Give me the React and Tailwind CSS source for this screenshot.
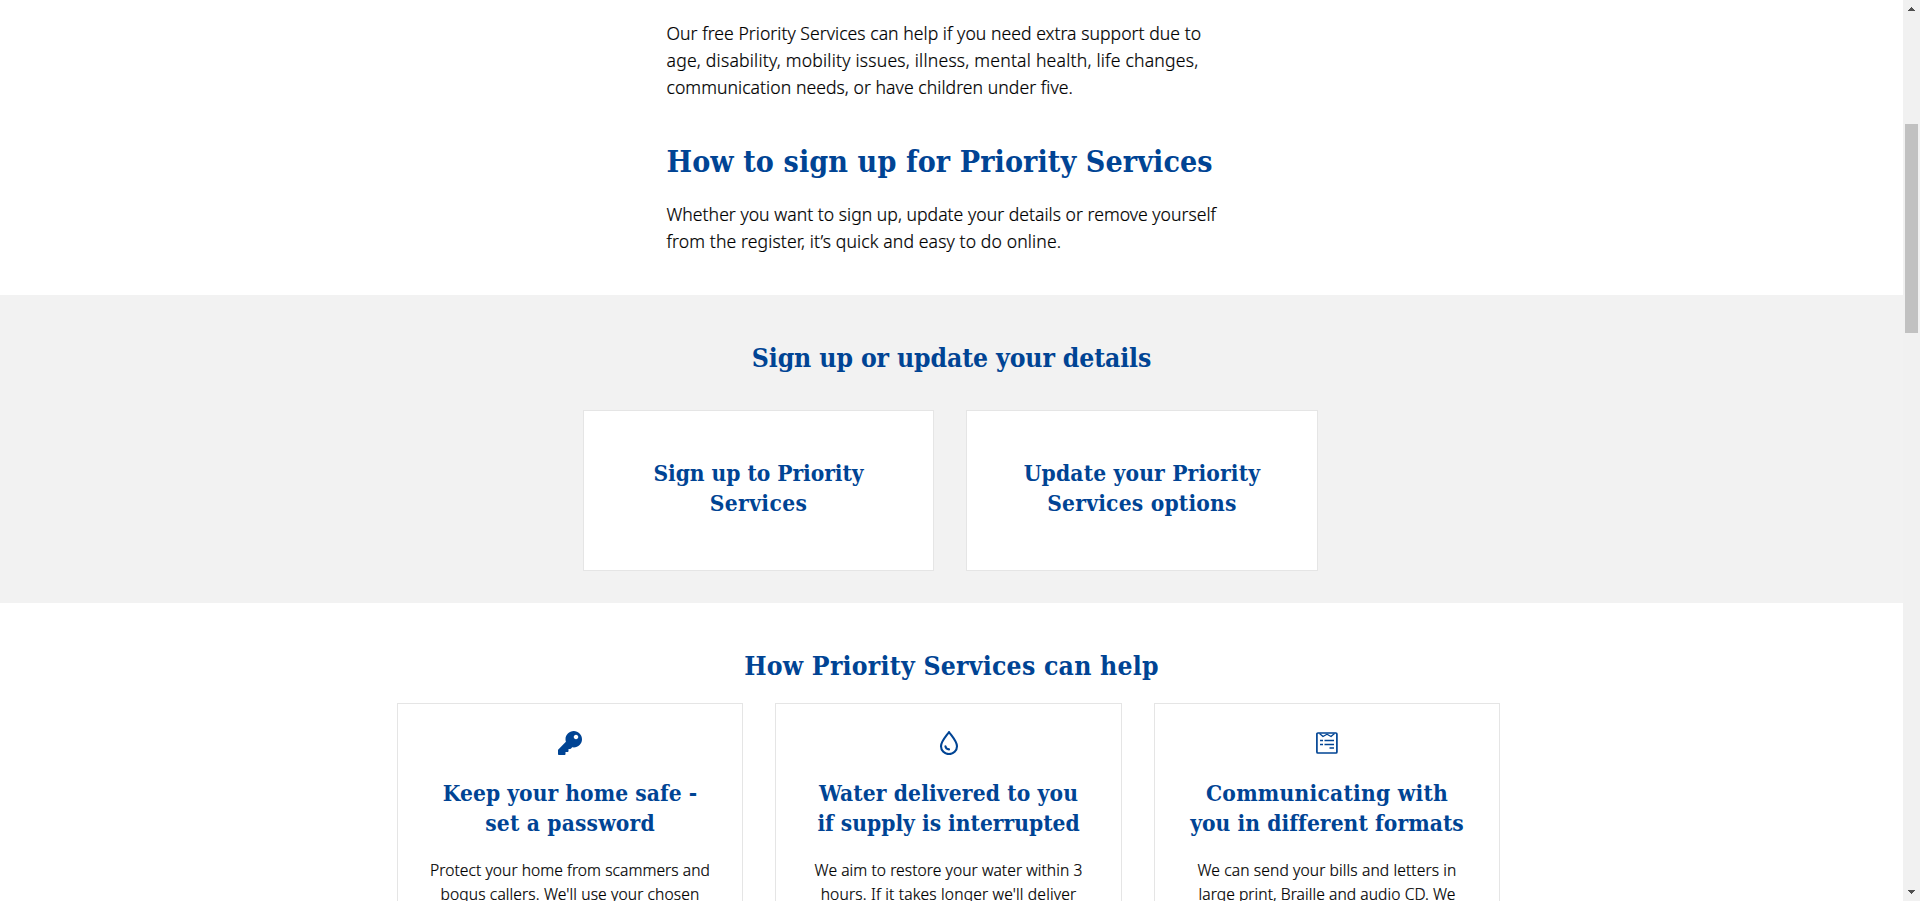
import { FaKey } from "react-icons/fa";

const HEADING =
  "font-['DejaVu_Serif',serif] [font-stretch:condensed] font-bold text-[#004494] whitespace-nowrap";
const BODY =
  "font-['Noto_Sans',sans-serif] font-light text-black [-webkit-text-stroke:0.2px_#000] whitespace-nowrap";

function Lines({ lines }) {
  return lines.map(([text, tracking]) => (
    <span key={text} className={`block ${tracking}`}>
      {text}
    </span>
  ));
}

function DropIcon() {
  return (
    <svg viewBox="0 0 24 24" className="size-6" fill="none" stroke="#004494" strokeWidth="2.1" strokeLinecap="round" strokeLinejoin="round">
      <path d="M12 1C9.600 4.600 4 10.300 4 15.200a8 7.900 0 0 0 16 0C20 10.300 14.400 4.600 12 1Z" />
      <path d="M8.400 15.200a3.800 3.800 0 0 0 3.600 3.200" />
    </svg>
  );
}

function FormIcon() {
  return (
    <svg viewBox="0 0 24 24" className="size-6" fill="none" stroke="#004494" strokeWidth="1.7" strokeLinejoin="round">
      <rect x="1.900" y="2" width="20" height="20" rx="1" />
      <path d="M4.500 2.500 8 5.500 12 3.200 16 5.500 19.500 2.500" strokeWidth="1.300" />
      <path d="M5 9.500h3M9.500 9.500h9.500M5 13.500h3M9.500 13.500h9.500M14.500 17h4.500" strokeWidth="1.500" />
    </svg>
  );
}

const SERVICES = [
  {
    width: "w-[346px]",
    icon: <FaKey className="size-6 text-[#004494]" />,
    title: [["Keep your home safe -", "tracking-[0.05px]"], ["set a password", "tracking-[0.18px]"]],
    body: [["Protect your home from scammers and", "tracking-[0.055px]"], ["bogus callers. We'll use your chosen", "tracking-[0.12px]"]],
  },
  {
    width: "w-[347px]",
    icon: <DropIcon />,
    title: [["Water delivered to you", "tracking-[0.14px]"], ["if supply is interrupted", "tracking-normal"]],
    body: [["We aim to restore your water within 3", "tracking-[0.07px]"], ["hours. If it takes longer we'll deliver", "tracking-[0.17px]"]],
  },
  {
    width: "w-[346px]",
    icon: <FormIcon />,
    title: [["Communicating with", "tracking-[0.24px]"], ["you in different formats", "tracking-[0.07px]"]],
    body: [["We can send your bills and letters in", "tracking-[0.115px]"], ["large print, Braille and audio CD. We", "tracking-[0.075px]"]],
  },
];

const ACTIONS = [
  { width: "w-[351px]", title: [["Sign up to Priority", "tracking-[-0.05px]"], ["Services", "tracking-[0.39px]"]] },
  { width: "w-[352px]", title: [["Update your Priority", "tracking-[0.17px]"], ["Services options", "tracking-[0.22px]"]] },
];

function Scrollbar() {
  return (
    <div className="flex h-full w-[17px] shrink-0 flex-col items-center bg-[#f1f1f1]">
      <svg viewBox="0 0 17 17" className="h-[17px] w-[17px]" fill="#505050" shapeRendering="crispEdges">
        <path d="M8 7h1v1h1v1h1v1h1v1H5v-1h1V9h1V8h1z" />
      </svg>
      <div className="mt-[107px] h-[209px] w-[13px] bg-[#c1c1c1]" />
      <svg viewBox="0 0 17 17" className="mt-auto h-[17px] w-[17px]" fill="#505050" shapeRendering="crispEdges">
        <path d="M5 6h7v1h-1v1h-1v1H9v1H8V9H7V8H6V7H5z" />
      </svg>
    </div>
  );
}

export default function App() {
  return (
    <div className="flex h-[901px] w-[1920px] overflow-hidden bg-white">
      <main className="flex h-full w-[1903px] flex-col overflow-hidden">
        <section className="h-[295px] shrink-0 pl-[666.500px] pt-5">
          <p className={`${BODY} text-[17.6px] leading-[27px]`}>
            <Lines
              lines={[
                ["Our free Priority Services can help if you need extra support due to", "tracking-[0.04px]"],
                ["age, disability, mobility issues, illness, mental health, life changes,", "tracking-[0.22px]"],
                ["communication needs, or have children under five.", "tracking-[0.055px]"],
              ]}
            />
          </p>
          <h2 className={`${HEADING} mt-[41px] text-[30.1px] leading-10 tracking-[0.1px]`}>How to sign up for Priority Services</h2>
          <p className={`${BODY} mt-[19px] text-[17.6px] leading-[27px]`}>
            <Lines
              lines={[
                ["Whether you want to sign up, update your details or remove yourself", "tracking-[0.025px]"],
                ["from the register, it’s quick and easy to do online.", "tracking-[0.12px]"],
              ]}
            />
          </p>
        </section>

        <section className="flex h-[308px] shrink-0 flex-col items-center bg-[#f2f2f2] pt-[45px]">
          <h2 className={`${HEADING} text-[26.3px] leading-9 tracking-[-0.12px]`}>Sign up or update your details</h2>
          <div className="mt-[34px] mr-[2px] flex gap-8">
            {ACTIONS.map((card) => (
              <a key={card.title[0][0]} className={`${card.width} h-[161px] border border-[#e5e5e5] bg-white pt-[47px] text-center`}>
                <h3 className={`${HEADING} text-[22.56px] leading-[30px]`}>
                  <Lines lines={card.title} />
                </h3>
              </a>
            ))}
          </div>
        </section>

        <section className="flex h-[298px] shrink-0 flex-col items-center pt-[45px]">
          <h2 className={`${HEADING} text-[26.3px] leading-9 tracking-[0.24px]`}>How Priority Services can help</h2>
          <div className="mt-[19px] mr-[6px] flex gap-8">
            {SERVICES.map((card) => (
              <article key={card.title[0][0]} className={`${card.width} flex h-[400px] flex-col items-center border border-[#e5e5e5] bg-white pt-[27px] text-center`}>
                {card.icon}
                <h3 className={`${HEADING} mt-[23px] text-[22.56px] leading-[30px]`}>
                  <Lines lines={card.title} />
                </h3>
                <p className={`${BODY} mt-5 text-[15.6px] leading-6`}>
                  <Lines lines={card.body} />
                </p>
              </article>
            ))}
          </div>
        </section>
      </main>
      <Scrollbar />
    </div>
  );
}
